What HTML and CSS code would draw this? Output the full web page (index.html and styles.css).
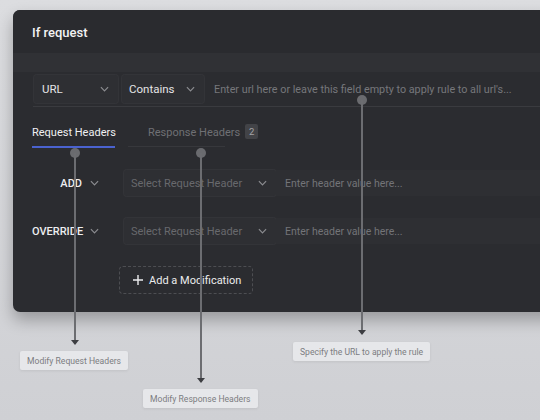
FILE: index.html
```html
<!DOCTYPE html>
<html lang="en">
<head>
  <meta charset="UTF-8">
  <title>If request</title>
  <link rel="stylesheet" href="styles.css">
</head>
<body>
  <div id="stage">
    <section id="rule-panel">
      <header class="panel-head">If request</header>
      <div class="panel-band"></div>
      <div class="url-row">
        <div class="select sel-url">
          <span>URL</span>
          <svg class="chev" viewBox="0 0 10 6"><path d="M1 1l4 4 4-4"/></svg>
        </div>
        <div class="select sel-op">
          <span>Contains</span>
          <svg class="chev" viewBox="0 0 10 6"><path d="M1 1l4 4 4-4"/></svg>
        </div>
        <div class="url-input">Enter url here or leave this field empty to apply rule to all url's...</div>
      </div>
      <div class="tabs">
        <div class="tab active">Request Headers</div>
        <div class="tab">Response Headers <span class="badge">2</span></div>
      </div>
      <div class="mods">
        <div class="mod-row">
          <div class="mod-type">
            <span>ADD</span>
            <svg class="chev" viewBox="0 0 10 6"><path d="M1 1l4 4 4-4"/></svg>
          </div>
          <div class="select sel-header">
            <span>Select Request Header</span>
            <svg class="chev" viewBox="0 0 10 6"><path d="M1 1l4 4 4-4"/></svg>
          </div>
          <div class="value-input">Enter header value here...</div>
        </div>
        <div class="mod-row">
          <div class="mod-type">
            <span>OVERRIDE</span>
            <svg class="chev" viewBox="0 0 10 6"><path d="M1 1l4 4 4-4"/></svg>
          </div>
          <div class="select sel-header">
            <span>Select Request Header</span>
            <svg class="chev" viewBox="0 0 10 6"><path d="M1 1l4 4 4-4"/></svg>
          </div>
          <div class="value-input">Enter header value here...</div>
        </div>
        <button class="add-mod">
          <svg viewBox="0 0 10 10"><path d="M5 0v10M0 5h10"/></svg>
          Add a Modification
        </button>
      </div>
    </section>

    <!-- annotation pins -->
    <div class="pin pin-req"><div class="pin-dot"></div><div class="pin-line"></div><div class="pin-arrow"></div></div>
    <div class="pin pin-resp"><div class="pin-dot"></div><div class="pin-line"></div><div class="pin-arrow"></div></div>
    <div class="pin pin-url"><div class="pin-dot"></div><div class="pin-line"></div><div class="pin-arrow"></div></div>

    <div class="note note-req">Modify Request Headers</div>
    <div class="note note-resp">Modify Response Headers</div>
    <div class="note note-url">Specify the URL to apply the rule</div>
  </div>
</body>
</html>
```

FILE: styles.css
```css
body {
  margin: 0;
  height: 420px;
  overflow: hidden;
  background: linear-gradient(#dcdde0, #cfd0d4);
  font-family: Roboto, "Liberation Sans", sans-serif;
}

#stage {
  position: relative;
  height: 420px;
  padding-top: 10px;
  box-sizing: border-box;
  overflow: hidden;
}

#rule-panel {
  margin-left: 13px;
  width: 600px;
  height: 302px;
  background-color: #2b2c30;
  border-radius: 7px;
  box-shadow: 0 8px 16px rgba(0, 0, 0, 0.28);
  overflow: hidden;
  color: #e6e6e8;
}

.panel-head {
  height: 43px;
  padding: 2px 0 0 19px;
  box-sizing: border-box;
  display: flex;
  align-items: center;
  font-size: 13px;
  font-weight: 500;
  color: #f2f2f3;
  background-color: #2a2b2f;
}

.panel-band {
  height: 19px;
  background-color: #303135;
}

.url-row {
  height: 34px;
  margin-left: 20px;
  padding-left: 1px;
  display: flex;
  align-items: center;
  gap: 4px;
  border-bottom: 1px solid #3a3b3f;
}

.select {
  height: 28px;
  box-sizing: border-box;
  display: flex;
  align-items: center;
  justify-content: space-between;
  padding: 0 9px 0 8px;
  background-color: #2e2f33;
  border-radius: 3px;
  box-shadow: 0 0 0 1px #333438;
  font-size: 11.5px;
  color: #e4e4e6;
}

.sel-url {
  width: 84px;
}

.sel-op {
  width: 82px;
  padding-left: 7px;
}

.chev {
  width: 9px;
  height: 6px;
  flex-shrink: 0;
  fill: none;
  stroke: #8b8c90;
  stroke-width: 1.3;
}

.url-input {
  padding-left: 6px;
  font-size: 10.8px;
  color: #76777b;
  white-space: nowrap;
}

.tabs {
  height: 41px;
  margin-left: 19px;
  display: flex;
  align-items: flex-end;
}

.tab {
  height: 22px;
  box-sizing: border-box;
  font-size: 11px;
  color: #6f7074;
  position: relative;
  padding-left: 33px;
  display: flex;
  align-items: flex-start;
  white-space: nowrap;
}

.tab.active {
  width: 83px;
  padding-left: 0;
  color: #f0f0f2;
  border-bottom: 2px solid #4a62cf;
}

.tab:not(.active)::after {
  content: "";
  position: absolute;
  left: 13px;
  bottom: 1px;
  width: 97px;
  height: 1px;
  background-color: #37383c;
}

.badge {
  margin: -2px 0 0 5px;
  width: 13px;
  height: 15px;
  border-radius: 2px;
  background-color: #424347;
  color: #a3a4a8;
  font-size: 9.5px;
  display: flex;
  align-items: center;
  justify-content: center;
}

.mods {
  padding: 22px 0 0 19px;
  display: flex;
  flex-direction: column;
  gap: 22px;
}

.mod-row {
  height: 26px;
  display: flex;
  align-items: center;
}

.mod-type {
  width: 92px;
  display: flex;
  align-items: center;
  font-size: 11px;
  font-weight: 500;
  color: #eeeef0;
}

.mod-type span {
  width: 50px;
  text-align: right;
}

.mod-type .chev {
  margin-left: 8px;
}

.sel-header {
  width: 152px;
  height: 26px;
  padding-left: 7px;
  font-size: 11px;
  color: #68696d;
}

.value-input {
  flex: 1;
  height: 26px;
  display: flex;
  align-items: center;
  padding-left: 9px;
  background-color: #2e2f33;
  font-size: 10.5px;
  color: #737478;
}

.add-mod {
  align-self: flex-start;
  margin-left: 87px;
  width: 134px;
  height: 28px;
  display: flex;
  align-items: center;
  gap: 6px;
  padding: 0 0 0 13px;
  background: transparent;
  border: 1px dashed #4d4e52;
  border-radius: 4px;
  font-family: inherit;
  font-size: 11px;
  color: #ececee;
}

.add-mod svg {
  width: 10px;
  height: 10px;
  stroke: #ececee;
  stroke-width: 1.4;
}

.pin {
  position: absolute;
  width: 10px;
  display: flex;
  flex-direction: column;
  align-items: center;
}

.pin-dot {
  width: 10px;
  height: 10px;
  border-radius: 50%;
  background-color: #6a6b6f;
  margin-bottom: -5px;
}

.pin-line {
  width: 2px;
  flex: 1;
  background-color: #6c6d71;
}

.pin-arrow {
  width: 0;
  height: 0;
  border-left: 4px solid transparent;
  border-right: 4px solid transparent;
  border-top: 5px solid #3d3e42;
}

.pin-req {
  left: 70px;
  top: 148px;
  height: 197px;
}

.pin-resp {
  left: 196px;
  top: 148px;
  height: 235px;
}

.pin-url {
  left: 357px;
  top: 95px;
  height: 240px;
}

.note {
  position: absolute;
  height: 19px;
  display: flex;
  align-items: center;
  padding: 0 7px;
  background-color: #e6e7ea;
  border-radius: 2px;
  box-shadow: 0 1px 3px rgba(0, 0, 0, 0.08);
  font-size: 8.6px;
  color: #7c7d81;
  white-space: nowrap;
}

.note-req {
  left: 20px;
  top: 351px;
}

.note-resp {
  left: 143px;
  top: 389px;
}

.note-url {
  left: 293px;
  top: 342px;
}
```
